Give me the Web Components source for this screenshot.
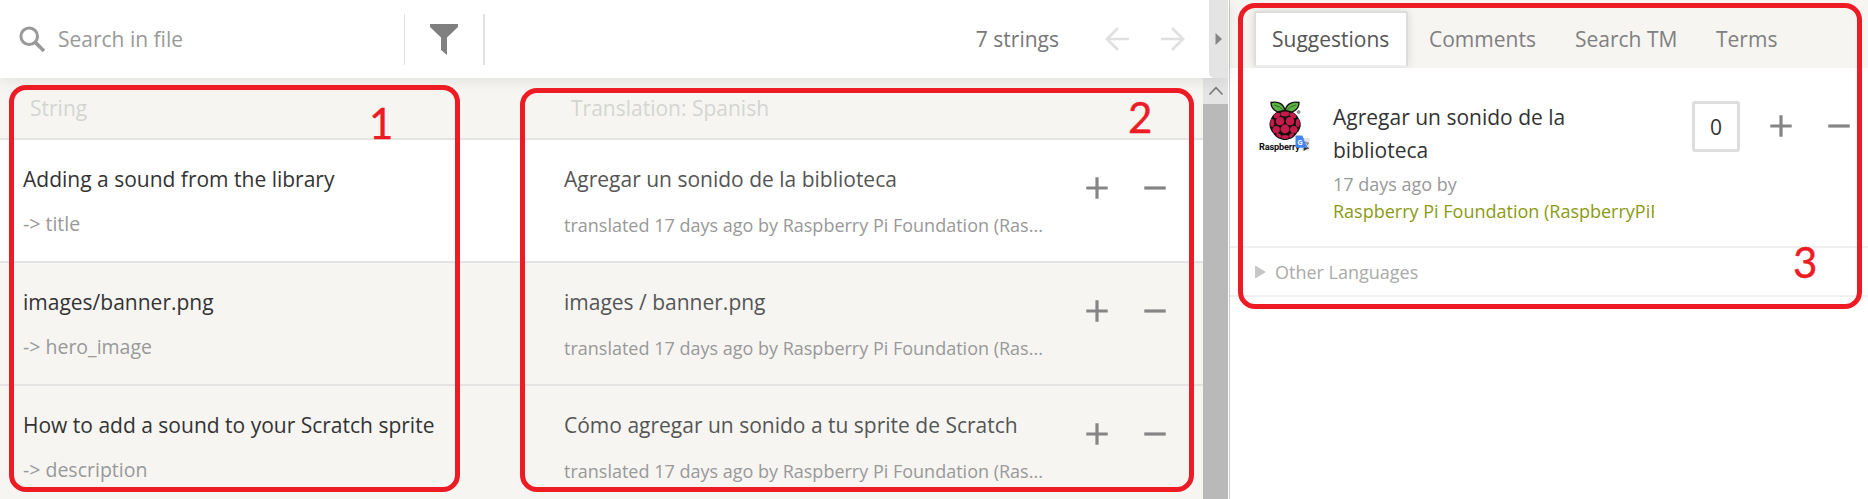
<!DOCTYPE html>
<html lang="en">
<head>
<meta charset="utf-8">
<title>Translation editor</title>
<style>
body{margin:0;background:#fff;font-family:"Open Sans","Noto Sans",sans-serif;font-size:21px;color:#333}
</style>
</head>
<body>
<translation-editor></translation-editor>
<script>
const define = (name, html) => {
  const t = document.createElement('template');
  t.innerHTML = html;
  customElements.define(name, class extends HTMLElement {
    constructor() {
      super();
      this.attachShadow({ mode: 'open' }).appendChild(t.content.cloneNode(true));
    }
  });
};

define('icon-plus', `<style>:host{display:block;width:22px;height:22px}svg{display:block}</style>
<svg width="22" height="22"><path d="M11 0.3V21.7M0.3 11H21.7" stroke="#858585" stroke-width="3.2"/></svg>`);
define('icon-minus', `<style>:host{display:block;width:22px;height:22px}svg{display:block}</style>
<svg width="22" height="22"><path d="M0.3 11H21.7" stroke="#858585" stroke-width="3.2"/></svg>`);

define('search-bar', `<style>
:host{display:flex;height:78px;background:#fff;align-items:center;position:relative;z-index:1;box-shadow:0 2px 14px rgba(0,0,0,.09)}
.search{display:flex;align-items:center;width:404px;color:#999}
.search svg{margin-left:19px}
.search span{margin-left:12px}
.filter{box-sizing:border-box;width:81px;height:51px;border-left:1px solid #e2e2e2;border-right:2px solid #e2e2e2;display:flex;margin-top:1px}
.filter svg{margin:10px 0 0 25px}
.count{margin-left:auto;color:#777}
.nav{display:flex;gap:32px;margin:0 24px 0 46px}
.handle{width:19px;height:78px;background:#e4e4e4;border-radius:0 0 0 5px;display:flex;align-items:center}
.handle svg{margin-left:6px}
</style>
<div class="search"><svg width="27" height="27" fill="none" stroke="#999"><circle cx="10.2" cy="10.3" r="8.3" stroke-width="3"/><path d="M16.3 16.4L25 25" stroke-width="3.6"/></svg><span>Search in file</span></div>
<div class="filter"><svg width="29" height="32"><path d="M0 0H28V3L17 13.5V31L11 26V13.5L0 3Z" fill="#808080"/></svg></div>
<div class="count">7 strings</div>
<div class="nav">
<svg width="24" height="24" fill="none" stroke="#e0e0e0" stroke-width="2.7"><path d="M24 12H2M13 1L2 12L13 23"/></svg>
<svg width="24" height="24" fill="none" stroke="#e0e0e0" stroke-width="2.7"><path d="M0 12H22M11 1L22 12L11 23"/></svg></div>
<div class="handle"><svg width="8" height="12"><path d="M0.5 0L7 6L0.5 12Z" fill="#858585"/></svg></div>`);

define('string-row', `<style>
:host{display:grid;grid-template-columns:541px 510px auto;box-sizing:border-box;height:123px;border-bottom:2px solid #e4e4e4;padding:24px 0 0 23px;background:#f6f5f2}
:host([active]){background:#fff}
.t{line-height:30px;white-space:nowrap}
.k{font-size:19.5px;line-height:30px;color:#999;margin-top:14.5px}
.m{font-size:18px;line-height:30px;color:#999;margin-top:16px;white-space:nowrap}
.tr{color:#555}
.act{display:flex;gap:36px;margin:13px 0 0 12px}
</style>
<div><div class="t"><slot name="source"></slot></div><div class="k"><slot name="key"></slot></div></div>
<div><div class="t tr"><slot name="translation"></slot></div><div class="m">translated 17 days ago by Raspberry Pi Foundation (Ras...</div></div>
<div class="act"><icon-plus></icon-plus><icon-minus></icon-minus></div>`);

define('string-list', `<style>
:host{display:flex;height:421px;overflow:hidden}
.rows{width:1203px}
.head{display:grid;grid-template-columns:541px 1fr;align-items:center;justify-items:start;height:60px;border-bottom:2px solid #e4e4e4;padding-left:30px;color:#d3d6d0;background:#f6f5f2}
.bar{width:25px;background:#b9b9b9}
.up{height:26px;background:#e4e4e4;display:flex;align-items:center;justify-content:center}
</style>
<div class="rows"><div class="head"><span>String</span><span>Translation: Spanish</span></div><slot></slot></div>
<div class="bar"><div class="up"><svg width="16" height="10" fill="none" stroke="#777" stroke-width="1.6"><path d="M1.5 8.5L8 1.7L14.5 8.5"/></svg></div></div>`);

define('tab-strip', `<style>
:host{display:flex;height:68px;background:#f6f5f2;color:#808080;overflow:hidden;line-height:78px}
.on{box-sizing:border-box;width:154px;height:56px;margin:11px 21px 0 24px;padding-left:16px;background:#fff;border:2px solid #ddd;border-bottom-color:#eee;border-radius:2px 2px 0 0;box-shadow:0 0 10px rgba(0,0,0,.12);color:#555;line-height:53px}
.c{width:146px}.s{width:141px}
</style>
<div class="on">Suggestions</div><div class="c">Comments</div><div class="s">Search TM</div><div>Terms</div>`);

define('project-logo', `<style>:host{display:block;width:54px;height:54px}svg{display:block;overflow:visible}</style>
<svg width="54" height="54" viewBox="0 0 54 54">
<path d="M26 12C18 13 12 8 12 1.5C20 0 26 3 26 12ZM26 12C26 3 33 0 40 1.5C40 8 34 13 26 12Z" fill="#5fb346" stroke="#111" stroke-width="1.4"/>
<path d="M15 4Q21 5 25 10M37 4Q31 5 27 10" fill="none" stroke="#225c18" stroke-width=".8"/>
<path d="M26 9C18 9 13 14 12 18C9 23 11 29 14 32C17 37 22 39 26 39C30 39 35 37 38 32C42 28 43 22 40 18C38 13 33 9 26 9Z" fill="#111"/>
<g fill="#c51a4a"><ellipse cx="26" cy="13" rx="4.5" ry="2.4"/><ellipse cx="18" cy="14.5" rx="3.5" ry="2.3" transform="rotate(-30 18 14.5)"/><ellipse cx="34" cy="14.5" rx="3.5" ry="2.3" transform="rotate(30 34 14.5)"/><circle cx="21" cy="20.2" r="4.1"/><circle cx="31" cy="20.2" r="4.1"/><ellipse cx="13.2" cy="22" rx="2" ry="4"/><ellipse cx="38.8" cy="22" rx="2" ry="4"/><circle cx="26" cy="28" r="4.4"/><circle cx="17.2" cy="28.6" r="3.7"/><circle cx="34.8" cy="28.6" r="3.7"/><ellipse cx="19.8" cy="34.3" rx="3" ry="1.7" transform="rotate(35 19.8 34.3)"/><ellipse cx="32.2" cy="34.3" rx="3" ry="1.7" transform="rotate(-35 32.2 34.3)"/><ellipse cx="26" cy="36" rx="3.7" ry="1.9"/></g>
<circle cx="39.6" cy="11" r="1.5" fill="#999" stroke="#666" stroke-width=".6"/>
<text x="0" y="48.5" font-family="Roboto,sans-serif" font-weight="700" font-size="9.2" fill="#111" textLength="41">Raspberry</text>
<path d="M39 37H50.5V49.5H43Z" fill="#e2e2e2"/>
<path d="M44 42H50M47 40.5V42M49 42Q48 46 44.5 47.5M45 43Q46 46 50 47.5" fill="none" stroke="#777" stroke-width="1"/>
<path d="M45 46L50 47L44.5 50Z" fill="#333"/>
<path d="M37.5 34.5H43.5L48 46.8H37.5Q36.5 46.8 36.5 45.8V35.5Q36.5 34.5 37.5 34.5Z" fill="#4285f4"/>
<text x="38.5" y="43.7" font-family="Roboto,sans-serif" font-weight="700" font-size="7.5" fill="#fff">G</text>
</svg>`);

define('suggestion-card', `<style>
:host{display:grid;grid-template-columns:74px 321px auto;box-sizing:border-box;height:180px;padding:33px 0 0 29px;border-bottom:2px solid #efefef}
.t{line-height:33px;width:280px}
.m{font-size:18px;line-height:27px;color:#999;margin-top:4px}
.a{color:#8a9a12;white-space:nowrap;overflow:hidden}
.act{display:flex;margin-left:38px}
.box{box-sizing:border-box;width:48px;height:51px;border:3px solid #ddd;border-radius:3px;text-align:center;line-height:46px;font-size:21px}
icon-plus{margin:14px 36px 0 30px}icon-minus{margin-top:14px}
</style>
<project-logo></project-logo>
<div><div class="t"><slot></slot></div><div class="m">17 days ago by<div class="a">Raspberry Pi Foundation (RaspberryPiFoundation)</div></div></div>
<div class="act"><div class="box">0</div><icon-plus></icon-plus><icon-minus></icon-minus></div>`);

define('other-languages', `<style>
:host{display:flex;align-items:center;height:47px;border-bottom:2px solid #efefef;color:#aaa;font-size:18px;padding-left:25px}
svg{margin-right:9px}
</style><svg width="11" height="14"><path d="M0 .5L11 7L0 13.5Z" fill="#c6c6c6"/></svg><span>Other Languages</span>`);

define('callout-box', `<style>
:host{position:absolute;z-index:5;box-sizing:border-box;border:5px solid #ed1c24;border-radius:17px;color:#ed1c24;font:42px/42px Lato,sans-serif;-webkit-text-stroke:.4px #ed1c24}
span{position:absolute;left:var(--nx);top:var(--ny)}
</style><span><slot></slot></span>`);

define('translation-editor', `<style>
:host{display:flex;position:relative;width:1868px;height:499px;overflow:hidden}
main{width:1228px}
aside{flex:1;border-left:1px solid #ccc;margin-left:1px;background:#fff}
</style>
<main><search-bar></search-bar><string-list>
<string-row active><span slot="source">Adding a sound from the library</span><span slot="key">-&gt; title</span><span slot="translation">Agregar un sonido de la biblioteca</span></string-row>
<string-row><span slot="source">images/banner.png</span><span slot="key">-&gt; hero_image</span><span slot="translation">images / banner.png</span></string-row>
<string-row><span slot="source">How to add a sound to your Scratch sprite</span><span slot="key">-&gt; description</span><span slot="translation">Cómo agregar un sonido a tu sprite de Scratch</span></string-row>
</string-list></main>
<aside><tab-strip></tab-strip><suggestion-card>Agregar un sonido de la biblioteca</suggestion-card><other-languages></other-languages></aside>
<callout-box style="left:9px;top:85px;width:451px;height:407px;--nx:355px;--ny:12px">1</callout-box>
<callout-box style="left:520px;top:88px;width:674px;height:404px;--nx:603px;--ny:3px">2</callout-box>
<callout-box style="left:1238px;top:3px;width:624px;height:306px;--nx:550px;--ny:233px">3</callout-box>`);
</script>
</body>
</html>
